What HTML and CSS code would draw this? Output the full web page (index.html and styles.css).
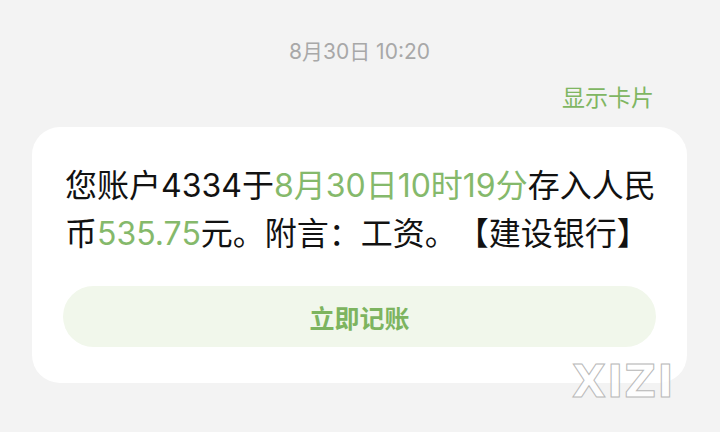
FILE: index.html
```html
<!DOCTYPE html>
<html lang="zh-CN">
<head>
<meta charset="utf-8">
<title>短信</title>
<link rel="stylesheet" href="styles.css">
</head>
<body>
<div class="page">
  <div class="time">8月30日 10:20</div>
  <div class="show">显示卡片</div>
  <div class="card">
    <p class="msg">您账户4334于<span class="hl">8月30日10时19分</span>存入人民币<span class="hl">535.75</span>元。附言：工资。【建设银行】</p>
    <div class="btn">立即记账</div>
  </div>
  <div class="mark">XIZI</div>
</div>
</body>
</html>
```
FILE: styles.css
```css
html, body {
  margin: 0;
  padding: 0;
  background: #f3f3f3;
}
body {
  font-family: "Inter", "Noto Sans CJK SC", sans-serif;
  width: 720px;
  height: 432px;
  overflow: hidden;
  text-spacing-trim: space-all;
}
.page {
  position: relative;
  padding: 37px 33px 0 32px;
}
.time {
  text-align: center;
  font-size: 21px;
  line-height: 30px;
  color: #a8a8a8;
}
.show {
  margin-top: 16px;
  padding-right: 33px;
  text-align: right;
  font-size: 23px;
  line-height: 30px;
  color: #7fb662;
}
.card {
  margin-top: 14px;
  background: #ffffff;
  border-radius: 28px;
  padding: 35px 31px 36px 31px;
}
.msg {
  margin: 0;
  padding-left: 2px;
  font-size: 32px;
  line-height: 48px;
  color: #121212;
  text-spacing-trim: space-all;
}
.hl {
  color: #85b96b;
}
.btn {
  margin-top: 28px;
  height: 61px;
  border-radius: 31px;
  background: #f1f7eb;
  display: flex;
  align-items: center;
  justify-content: center;
  font-size: 25px;
  font-weight: 600;
  color: #7db45f;
}
.mark {
  position: absolute;
  left: 572px;
  top: 356px;
  font-family: "DejaVu Sans", sans-serif;
  font-weight: bold;
  font-size: 44px;
  letter-spacing: 1px;
  color: rgba(255, 255, 255, 0.9);
  -webkit-text-stroke: 1px #b8b8b8;
}
```
